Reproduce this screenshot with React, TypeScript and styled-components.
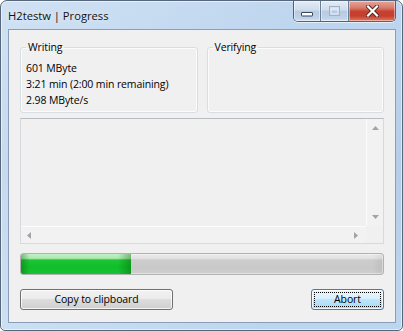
import React from 'react';
import styled, { createGlobalStyle } from 'styled-components';

const Global = createGlobalStyle`
  html, body { margin: 0; padding: 0; background: #ffffff; }
  body {
    font-family: "Open Sans", "Noto Sans", "DejaVu Sans", sans-serif;
    font-size: 10.5px;
    letter-spacing: -0.12px;
    color: #000;
  }
  #root { width: 403px; height: 331px; }
`;

const Window = styled.div`
  box-sizing: border-box;
  width: 403px;
  height: 331px;
  display: flex;
  flex-direction: column;
  border: 1px solid #56677b;
  border-radius: 7px 7px 5px 5px;
  padding: 0 6px 7px 7px;
  background:
    linear-gradient(100deg, rgba(255, 255, 255, 0.28) 0%, rgba(255, 255, 255, 0.1) 45%, rgba(255, 255, 255, 0) 70%),
    linear-gradient(180deg, #bed6ef 0%, #b4cee9 50%, #bdd6ef 100%);
  box-shadow: inset 0 0 0 1px rgba(255, 255, 255, 0.55);
`;

const TitleBar = styled.div`
  height: 28px;
  display: flex;
  align-items: flex-start;
  flex: none;
`;

const Title = styled.div`
  font-size: 11.2px;
  letter-spacing: 0;
  line-height: 16px;
  margin-top: 7px;
  margin-left: 0;
  color: #111;
  flex: 1;
  text-shadow: 0 0 6px rgba(255, 255, 255, 0.9);
`;

const CaptionGroup = styled.div`
  display: flex;
  height: 20px;
  border: 1px solid #50627a;
  border-top: none;
  border-radius: 0 0 5px 5px;
  overflow: hidden;
  box-shadow: 0 1px 0 rgba(255, 255, 255, 0.6);
`;

const CaptionButton = styled.div<{ $w: number; $close?: boolean; $first?: boolean }>`
  width: ${(p) => p.$w}px;
  height: 100%;
  display: flex;
  align-items: center;
  justify-content: center;
  box-shadow: inset 0 0 0 1px rgba(255, 255, 255, 0.45);
  border-left: ${(p) => (p.$first ? 'none' : '1px solid #6b7f97')};
  background: ${(p) =>
    p.$close
      ? 'linear-gradient(180deg, #e5a699 0%, #d67a6a 35%, #c8402f 52%, #c63f2d 75%, #dc7a62 100%)'
      : 'linear-gradient(180deg, #e4ecf6 0%, #cfdcec 45%, #b8cbe2 52%, #bfd2e8 85%, #d2e1f1 100%)'};
`;

const Client = styled.div`
  flex: 1;
  display: flex;
  flex-direction: column;
  background: #f0f0f0;
  border: 1px solid #8a9fb7;
  padding: 10px 11px 12px 11px;
  min-height: 0;
`;

const GroupRow = styled.div`
  display: grid;
  grid-template-columns: 1fr 1fr;
  column-gap: 9px;
  height: 73px;
`;

const Group = styled.fieldset`
  margin: 0;
  padding: 6px 5px 4px 5px;
  border: 1px solid #d5dfe5;
  border-radius: 3px;
  box-shadow: inset 0 0 0 1px rgba(255, 255, 255, 0.7);
  min-width: 0;
`;

const Legend = styled.legend`
  padding: 0 2px;
  line-height: 14px;
  color: #000;
`;

const Line = styled.div`
  line-height: 16px;
  white-space: nowrap;
`;

const LogBox = styled.div`
  margin-top: 5px;
  height: 126px;
  box-sizing: border-box;
  border: 1px solid #d6d9de;
  border-top-color: #b9bcc2;
  display: grid;
  grid-template-columns: 1fr 17px;
  grid-template-rows: 1fr 17px;
  background: #f0f0f0;
  box-shadow: inset 1px 1px 0 #ffffff;
`;

const LogArea = styled.div`
  background: #f0f0f0;
`;

const VScroll = styled.div`
  display: flex;
  flex-direction: column;
  justify-content: space-between;
  align-items: center;
  padding: 7px 0 7px;
  background: #f2f2f2;
  border-left: 1px solid #fbfbfb;
`;

const HScroll = styled.div`
  display: flex;
  justify-content: space-between;
  align-items: center;
  padding: 0 8px 0 6px;
  background: #f2f2f2;
  border-top: 1px solid #fbfbfb;
`;

const Corner = styled.div`
  background: #f0f0f0;
`;

const Progress = styled.div`
  margin-top: 9px;
  height: 22px;
  box-sizing: border-box;
  border: 1px solid #b2b2b2;
  border-radius: 3px;
  overflow: hidden;
  display: flex;
  background:
    linear-gradient(90deg, rgba(0, 0, 0, 0) 97%, rgba(0, 0, 0, 0.06) 100%),
    linear-gradient(180deg, #eaeaea 0%, #e2e2e2 22%, #cdcdcd 30%, #c9c9c9 70%, #cfcfcf 100%);
  box-shadow: inset 0 0 0 1px rgba(255, 255, 255, 0.4);
`;

const Fill = styled.div`
  height: 100%;
  background:
    linear-gradient(90deg, rgba(0, 80, 0, 0.35) 0%, rgba(0, 80, 0, 0) 8%, rgba(0, 80, 0, 0) 88%, rgba(0, 80, 0, 0.35) 100%),
    linear-gradient(180deg, #c4f0c6 0%, #a8e9ad 22%, #1fc435 30%, #0fbd2a 65%, #19c236 100%);
`;

const ButtonRow = styled.div`
  margin-top: 14px;
  display: flex;
  justify-content: space-between;
`;

const Button = styled.button<{ $default?: boolean; $w: number }>`
  width: ${(p) => p.$w}px;
  height: 21px;
  box-sizing: border-box;
  padding: 0;
  margin: 0;
  font-family: inherit;
  font-size: inherit;
  letter-spacing: inherit;
  line-height: 19px;
  color: #000;
  border-radius: 3px;
  border: 1px solid ${(p) => (p.$default ? '#3c7fb1' : '#707070')};
  background: ${(p) =>
    p.$default
      ? 'linear-gradient(180deg, #eaf6fd 0%, #d9f0fc 45%, #bee6fd 50%, #a7d9f5 100%)'
      : 'linear-gradient(180deg, #f2f2f2 0%, #ebebeb 45%, #dddddd 50%, #cfcfcf 100%)'};
  box-shadow: inset 0 0 0 1px rgba(255, 255, 255, 0.75);
  position: relative;
  display: flex;
  align-items: center;
  justify-content: center;
`;

const FocusRing = styled.span`
  position: absolute;
  inset: 2px;
  border: 1px dotted #000;
  pointer-events: none;
`;

const Arrow = ({ dir }: { dir: 'up' | 'down' | 'left' | 'right' }) => {
  const pts: Record<string, string> = {
    up: '0,4 3.5,0 7,4',
    down: '0,0 7,0 3.5,4',
    left: '4,0 4,7 0,3.5',
    right: '0,0 0,7 4,3.5',
  };
  const vert = dir === 'up' || dir === 'down';
  return (
    <svg width={vert ? 7 : 4} height={vert ? 4 : 7} viewBox={vert ? '0 0 7 4' : '0 0 4 7'}>
      <polygon points={pts[dir]} fill="#a3a3a3" />
    </svg>
  );
};

const MinIcon = () => (
  <svg width="12" height="14" viewBox="0 0 12 14">
    <rect x="0.5" y="8.5" width="11" height="3.5" rx="0.5" fill="#ffffff" stroke="#34465a" strokeWidth="1" />
  </svg>
);

const MaxIcon = () => (
  <svg width="11" height="10" viewBox="0 0 11 10">
    <rect x="0.5" y="0.5" width="10" height="9" fill="none" stroke="#9fb1c6" strokeWidth="1" />
    <rect x="2" y="3" width="7" height="5" fill="none" stroke="#e9f0f8" strokeWidth="1" />
  </svg>
);

const CloseIcon = () => (
  <svg width="13" height="12" viewBox="0 0 13 12">
    <path d="M2 1.5 L11 10.5 M11 1.5 L2 10.5" stroke="#4a2420" strokeWidth="4" strokeLinecap="square" />
    <path d="M2 1.5 L11 10.5 M11 1.5 L2 10.5" stroke="#ffffff" strokeWidth="2.2" strokeLinecap="square" />
  </svg>
);

export default function App() {
  const progress = 30.5;
  return (
    <>
      <Global />
      <Window>
        <TitleBar>
          <Title>H2testw | Progress</Title>
          <CaptionGroup>
            <CaptionButton $w={26} $first>
              <MinIcon />
            </CaptionButton>
            <CaptionButton $w={27}>
              <MaxIcon />
            </CaptionButton>
            <CaptionButton $w={46} $close>
              <CloseIcon />
            </CaptionButton>
          </CaptionGroup>
        </TitleBar>
        <Client>
          <GroupRow>
            <Group>
              <Legend>Writing</Legend>
              <Line>601 MByte</Line>
              <Line>3:21 min (2:00 min remaining)</Line>
              <Line>2.98 MByte/s</Line>
            </Group>
            <Group>
              <Legend>Verifying</Legend>
            </Group>
          </GroupRow>
          <LogBox>
            <LogArea />
            <VScroll>
              <Arrow dir="up" />
              <Arrow dir="down" />
            </VScroll>
            <HScroll>
              <Arrow dir="left" />
              <Arrow dir="right" />
            </HScroll>
            <Corner />
          </LogBox>
          <Progress>
            <Fill style={{ width: `${progress}%` }} />
          </Progress>
          <ButtonRow>
            <Button $w={153}>Copy to clipboard</Button>
            <Button $w={73} $default>
              Abort
              <FocusRing />
            </Button>
          </ButtonRow>
        </Client>
      </Window>
    </>
  );
}
